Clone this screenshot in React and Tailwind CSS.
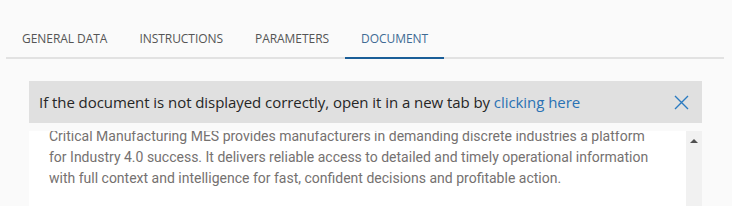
import React from 'react';

const TABS = ['General Data', 'Instructions', 'Parameters', 'Document'];

const DOC_TEXT =
  'Critical Manufacturing MES provides manufacturers in demanding discrete industries a platform for Industry 4.0 success. It delivers reliable access to detailed and timely operational information with full context and intelligence for fast, confident decisions and profitable action.';

export default function App() {
  const active = 'Document';

  return (
    <div className="h-[206px] overflow-hidden bg-[#fafafa] font-['Open_Sans',sans-serif]">
      {/* Tabs */}
      <div className="ml-[6px] flex w-[718px] border-b-2 border-[#e2e2e2] pt-[31px]">
        {TABS.map((t) => (
          <div
            key={t}
            className={`-mb-[2px] px-4 pb-[10px] text-[12px] uppercase leading-4 tracking-[-0.004em] ${
              t === active ? 'border-b-2 border-[#1a5e98] text-[#3f6b94]' : 'border-b-2 border-transparent text-[#555]'
            }`}
          >
            {t}
          </div>
        ))}
      </div>

      {/* Notice banner */}
      <div className="ml-[29px] mt-[22px] flex h-[42px] w-[673px] items-center justify-between bg-[#e0e0e0] pl-[10px] pr-[13px]">
        <p className="text-[15px] tracking-[-0.004em] text-[#262626]">
          If the document is not displayed correctly, open it in a new tab by{' '}
          <a className="text-[#2a72b4]">clicking here</a>
        </p>
        <button className="flex h-4 w-4 items-center justify-center text-[#2b7bc1]">
          <svg width="15" height="15" viewBox="0 0 15 15" fill="none" stroke="currentColor" strokeWidth="1.4">
            <path d="M1 1L14 14M14 1L1 14" />
          </svg>
        </button>
      </div>

      {/* Document viewer */}
      <div className="ml-[29px] mt-[8px] flex h-[80px] w-[673px] bg-white">
        <div className="flex-1 overflow-hidden">
          <p className="-mt-[5px] pl-[20px] pr-[30px] font-['Roboto',sans-serif] text-[14px] leading-[21px] text-[#757170]">
            {DOC_TEXT}
          </p>
        </div>
        <div className="flex w-4 justify-center bg-[#f1f1f1] pt-[7px]">
          <svg width="8" height="5" viewBox="0 0 8 5">
            <path d="M0 5L4 1L8 5Z" fill="#505050" />
          </svg>
        </div>
      </div>
    </div>
  );
}
